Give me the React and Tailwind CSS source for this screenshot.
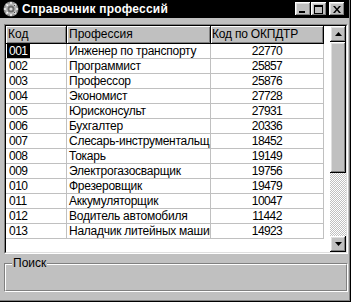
import React from "react";

const rows = [
  ["001", "Инженер по транспорту", "22770"],
  ["002", "Программист", "25857"],
  ["003", "Профессор", "25876"],
  ["004", "Экономист", "27728"],
  ["005", "Юрисконсульт", "27931"],
  ["006", "Бухгалтер", "20336"],
  ["007", "Слесарь-инструментальщик", "18452"],
  ["008", "Токарь", "19149"],
  ["009", "Электрогазосварщик", "19756"],
  ["010", "Фрезеровщик", "19479"],
  ["011", "Аккумуляторщик", "10047"],
  ["012", "Водитель автомобиля", "11442"],
  ["013", "Наладчик литейных машин", "14923"],
];

const btn =
  "shadow-[inset_-1px_-1px_#000,inset_1px_1px_#fff,inset_-2px_-2px_#808080,inset_2px_2px_#dfdfdf] bg-[#c0c0c0]";

function Arrow({ down }) {
  return (
    <svg width="7" height="4" viewBox="0 0 7 4">
      {down ? (
        <polygon points="0,0 7,0 3.5,4" fill="#000" />
      ) : (
        <polygon points="3.5,0 7,4 0,4" fill="#000" />
      )}
    </svg>
  );
}

function AppIcon() {
  return (
    <svg width="16" height="16" viewBox="0 0 16 16">
      <circle cx="8" cy="8" r="7.5" fill="#8a8a8a" />
      <circle cx="8" cy="8" r="6" fill="#b8b8b8" />
      {[...Array(8)].map((_, i) => {
        const a = (i * Math.PI) / 4;
        return (
          <rect
            key={i}
            x={8 + Math.cos(a) * 6 - 1}
            y={8 + Math.sin(a) * 6 - 1}
            width="2"
            height="2"
            fill="#e0e0e0"
          />
        );
      })}
      <circle cx="8" cy="8" r="3.5" fill="#6a6a6a" />
      <circle cx="8" cy="8" r="1.6" fill="#d8d8d8" />
      <rect x="4" y="4" width="1" height="1" fill="#fff" />
      <rect x="11" y="11" width="1" height="1" fill="#444" />
      <rect x="11" y="4" width="1" height="1" fill="#444" />
      <rect x="4" y="11" width="1" height="1" fill="#fff" />
    </svg>
  );
}

export default function App() {
  return (
    <div className="w-[351px] h-[302px] overflow-hidden border-r border-b border-black font-['Liberation_Sans',Arial,sans-serif] text-[12px] text-black">
      <div className="h-full flex flex-col bg-[#c0c0c0] border-r border-b border-[#808080]">
        {/* Title bar */}
        <div className="h-[18px] bg-black flex items-center shrink-0">
          <div className="ml-[3px] w-[16px] h-[16px]">
            <AppIcon />
          </div>
          <span className="ml-[3px] text-white font-bold text-[12px] leading-none tracking-[0.2px]">
            Справочник профессий
          </span>
          <div className="ml-auto mr-[4px] flex items-center">
            <div className={`${btn} w-[16px] h-[14px] flex items-end justify-center pb-[3px]`}>
              <div className="w-[6px] h-[2px] bg-black ml-[-2px]" />
            </div>
            <div className={`${btn} w-[16px] h-[14px] flex items-center justify-center`}>
              <div className="w-[9px] h-[9px] border border-black border-t-2 ml-[-1px]" />
            </div>
            <div className={`${btn} w-[16px] h-[14px] ml-[2px] flex items-center justify-center`}>
              <svg width="8" height="7" viewBox="0 0 8 7" className="ml-[-1px]">
                <path d="M0 0h2l2 2.5L6 0h2L5 3.5 8 7H6L4 4.5 2 7H0l3-3.5z" fill="#000" />
              </svg>
            </div>
          </div>
        </div>

        {/* Client */}
        <div className="flex-1 flex flex-col pl-[4px] pr-[1px] pt-[6px]">
          {/* Grid with sunken border */}
          <div className="h-[230px] border-t border-l border-[#808080] border-b-white border-r-white border-b border-r">
            <div className="h-full border-t border-l border-black border-b border-r border-b-[#dfdfdf] border-r-[#dfdfdf] bg-white flex">
              {/* columns */}
              <div className="w-[318px] flex flex-col">
                <div className="flex h-[18px] border-b border-black">
                  <div className="w-[61px] border-r border-black shadow-[inset_1px_1px_#fff,inset_-1px_-1px_#808080] bg-[#c0c0c0] pl-[2px] leading-[17px]">
                    Код
                  </div>
                  <div className="w-[144px] border-r border-black shadow-[inset_1px_1px_#fff,inset_-1px_-1px_#808080] bg-[#c0c0c0] pl-[2px] leading-[17px]">
                    Профессия
                  </div>
                  <div className="w-[113px] border-r border-black shadow-[inset_1px_1px_#fff,inset_-1px_-1px_#808080] bg-[#c0c0c0] pl-[1px] leading-[17px] tracking-[-0.2px]">
                    Код по ОКПДТР
                  </div>
                </div>
                {rows.map((r, i) => (
                  <div key={r[0]} className="flex h-[15px] border-b border-[#c0c0c0]">
                    <div className="w-[61px] border-r border-[#c0c0c0] pl-[1px] leading-[14px] whitespace-nowrap overflow-hidden tracking-[-0.5px]">
                      {i === 0 ? (
                        <span className="bg-black text-white px-[2px] inline-block h-[14px]">{r[0]}</span>
                      ) : (
                        <span className="pl-[2px]">{r[0]}</span>
                      )}
                    </div>
                    <div className="w-[144px] border-r border-[#c0c0c0] pl-[2px] leading-[14px] whitespace-nowrap overflow-hidden tracking-[-0.25px]">
                      {r[1]}
                    </div>
                    <div className="w-[113px] border-r border-[#c0c0c0] text-center leading-[14px] whitespace-nowrap overflow-hidden tracking-[-0.6px]">
                      {r[2]}
                    </div>
                  </div>
                ))}
              </div>
              <div className="flex-1" />
              {/* scrollbar */}
              <div className="w-[16px] flex flex-col">
                <div className={`${btn} h-[16px] flex items-center justify-center`}>
                  <Arrow />
                </div>
                <div className={`${btn} h-[131px]`} />
                <div className="flex-1 bg-[image:repeating-conic-gradient(#fff_0%_25%,#c0c0c0_0%_50%)] bg-[length:2px_2px]" />
                <div className={`${btn} h-[16px] flex items-center justify-center`}>
                  <Arrow down />
                </div>
              </div>
            </div>
          </div>

          {/* Group box */}
          <div className="relative mt-[9px] h-[29px] border-t border-l border-[#808080] border-b border-r border-b-white border-r-white">
            <div className="h-full border-t border-l border-white border-b border-r border-b-[#808080] border-r-[#808080]" />
            <span className="absolute left-[7px] -top-[8px] bg-[#c0c0c0] px-[1px] leading-[14px]">
              Поиск
            </span>
          </div>
        </div>
      </div>
    </div>
  );
}
